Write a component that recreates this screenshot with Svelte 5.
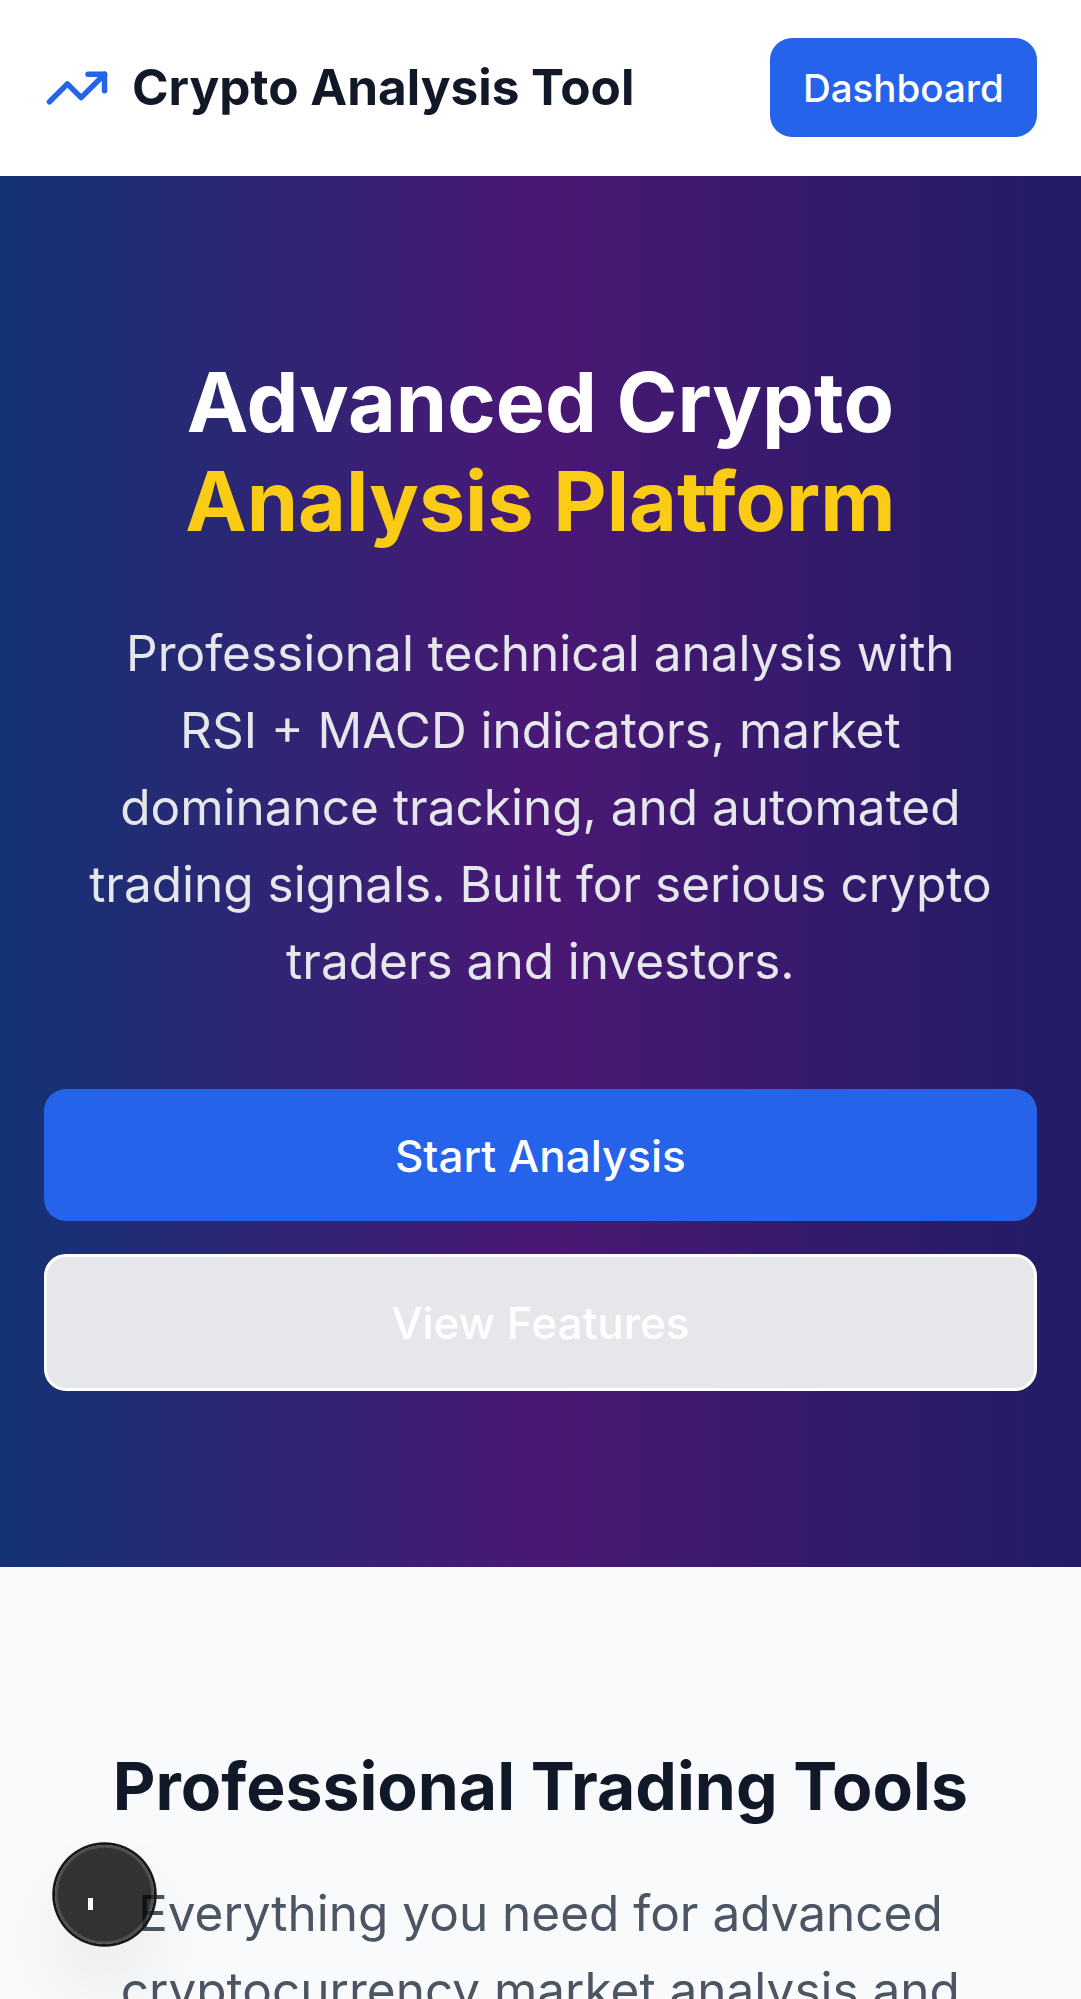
<script>
  const headline = ['Advanced Crypto', 'Analysis Platform'];
  const intro = [
    'Professional technical analysis with',
    'RSI + MACD indicators, market',
    'dominance tracking, and automated',
    'trading signals. Built for serious crypto',
    'traders and investors.'
  ];
  const toolsIntro = ['Everything you need for advanced', 'cryptocurrency market analysis and'];
</script>

<div class="page">
  <header>
    <div class="brand">
      <svg viewBox="0 0 24 24" aria-hidden="true">
        <path d="M22 7 13.5 15.5 8.5 10.5 2 17" />
        <path d="M16 7h6v6" />
      </svg>
      <span>Crypto Analysis Tool</span>
    </div>
    <button class="dashboard">Dashboard</button>
  </header>

  <section class="hero">
    <h1>{headline[0]}<span>{headline[1]}</span></h1>
    <p>{#each intro as line}<span>{line}</span>{/each}</p>
    <div class="actions">
      <button class="primary">Start Analysis</button>
      <button class="outline">View Features</button>
    </div>
  </section>

  <section class="tools">
    <h2>Professional Trading Tools</h2>
    <p>{#each toolsIntro as line}<span>{line}</span>{/each}</p>
  </section>

  <div class="badge"><i></i></div>
</div>

<style>
  :global(html) { font-size: 44px; }
  :global(body) { margin: 0; overflow: hidden; background: #f9fafb; }
  .page {
    position: relative;
    width: 1080.75px;
    height: 1999px;
    overflow: hidden;
    background: #f9fafb;
    font-family: Inter, sans-serif;
    -webkit-font-smoothing: antialiased;
  }
  h1, h2, p { margin: 0; }
  button {
    border: 0;
    padding: 0;
    font: inherit;
    font-weight: 500;
    color: #fff;
    border-radius: 0.5rem;
  }
  header {
    box-sizing: border-box;
    height: 4rem;
    padding: 0 1rem;
    display: flex;
    align-items: center;
    justify-content: space-between;
    background: #fff;
  }
  .brand {
    display: flex;
    align-items: center;
    gap: 0.5rem;
    font-size: 1.125rem;
    line-height: 1.75rem;
    font-weight: 700;
    color: #111827;
  }
  .brand span { padding-bottom: 2px; }
  svg {
    width: 1.5rem;
    height: 1.5rem;
    fill: none;
    stroke: #2563eb;
    stroke-width: 2;
    stroke-linecap: round;
    stroke-linejoin: round;
  }
  .dashboard {
    height: 2.25rem;
    margin-bottom: 0.5px;
    padding: 0 0.75rem;
    font-size: 0.875rem;
    background: #2563eb;
  }
  .hero {
    padding: 4rem 1rem;
    text-align: center;
    background: linear-gradient(to right, #133374, #4a1874 50%, #211c65);
  }
  h1 {
    padding-top: 1px;
    font-size: 1.875rem;
    line-height: 2.25rem;
    font-weight: 700;
    color: #fff;
  }
  h1 span { display: block; color: #facc15; }
  p { font-size: 1.125rem; line-height: 1.75rem; }
  p span { display: block; white-space: nowrap; }
  .hero p { margin-top: 64px; color: #e5e7eb; }
  .actions {
    display: flex;
    flex-direction: column;
    gap: 0.75rem;
    margin-top: 89px;
  }
  .primary { height: 3rem; padding-top: 2px; background: #2563eb; }
  .outline {
    box-sizing: border-box;
    height: 137px;
    background: #e5e7eb;
    border: 3px solid #fff;
  }
  .tools { padding: 174.5px 1rem 0; text-align: center; }
  h2 {
    font-size: 1.5rem;
    line-height: 2rem;
    font-weight: 700;
    color: #111827;
  }
  .tools p { margin-top: 45px; color: #4b5563; }
  .badge {
    position: absolute;
    left: 55px;
    bottom: 55px;
    width: 99px;
    height: 99px;
    border-radius: 50%;
    background: rgba(0, 0, 0, 0.8);
    box-shadow:
      0 0 0 2.75px #171717,
      inset 0 0 0 2.75px rgba(255, 255, 255, 0.14),
      0 44px 88px -22px rgba(0, 0, 0, 0.24);
  }
  .badge i {
    position: absolute;
    left: 32.5px;
    top: 53px;
    width: 5.5px;
    height: 12px;
    background: #fff;
  }
</style>
